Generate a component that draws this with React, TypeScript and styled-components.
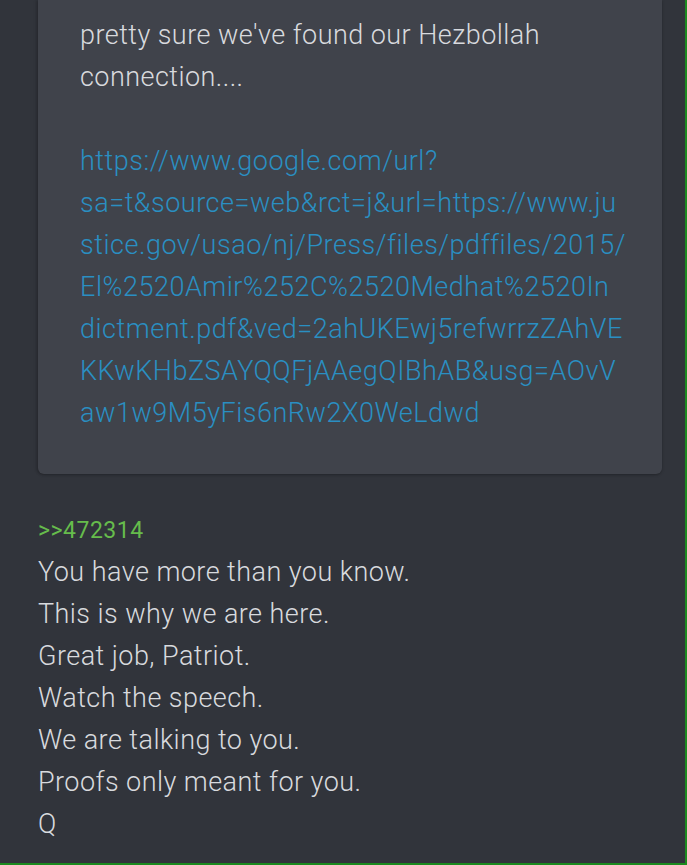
import styled, { createGlobalStyle } from 'styled-components';

const GlobalStyle = createGlobalStyle`
  html, body {
    margin: 0;
    padding: 0;
    background: #31343b;
  }
  body {
    font-family: Roboto, "Noto Sans", sans-serif;
    font-weight: 300;
  }
`;

const Frame = styled.div`
  box-sizing: border-box;
  width: 687px;
  height: 865px;
  overflow: hidden;
  background: #31343b;
  border-right: 2px solid #1b8a1f;
  border-bottom: 2px solid #1b8a1f;
  padding: 0 36px 0 38px;
`;

const QuoteCard = styled.div`
  background: #40434b;
  border-radius: 0 0 6px 6px;
  box-shadow: 0 1px 3px rgba(0, 0, 0, 0.25), -2px 0 3px rgba(0, 0, 0, 0.12);
  padding: 14px 30px 40px 42px;
  width: 624px;
  box-sizing: border-box;
`;

const Body = styled.p`
  margin: 0;
  font-size: 27px;
  letter-spacing: 0.45px;
  line-height: 42px;
  color: #d8dade;
`;

const Link = styled.a`
  display: block;
  margin-top: 42px;
  font-size: 27px;
  letter-spacing: 0.52px;
  line-height: 42px;
  color: #2a8fc2;
  text-decoration: none;
  white-space: nowrap;
`;

const Reply = styled.div`
  margin-top: 36px;
`;

const QuoteLink = styled.a`
  display: block;
  font-size: 23px;
  font-weight: 400;
  letter-spacing: 0.5px;
  line-height: 41px;
  color: #66bc4c;
  text-decoration: none;
`;

const LINES = [
  'You have more than you know.',
  'This is why we are here.',
  'Great job, Patriot.',
  'Watch the speech.',
  'We are talking to you.',
  'Proofs only meant for you.',
  'Q',
];

const URL_LINES = [
  'https://www.google.com/url?',
  'sa=t&source=web&rct=j&url=https://www.ju',
  'stice.gov/usao/nj/Press/files/pdffiles/2015/',
  'El%2520Amir%252C%2520Medhat%2520In',
  'dictment.pdf&ved=2ahUKEwj5refwrrzZAhVE',
  'KKwKHbZSAYQQFjAAegQIBhAB&usg=AOvV',
  'aw1w9M5yFis6nRw2X0WeLdwd',
];

export default function App() {
  return (
    <Frame>
      <GlobalStyle />
      <QuoteCard>
        <Body>
          pretty sure we've found our Hezbollah
          <br />
          connection....
        </Body>
        <Link href="#">
          {URL_LINES.map((part, i) => (
            <span key={part}>
              {part}
              {i < URL_LINES.length - 1 && <br />}
            </span>
          ))}
        </Link>
      </QuoteCard>
      <Reply>
        <QuoteLink href="#">&gt;&gt;472314</QuoteLink>
        {LINES.map((line) => (
          <Body key={line}>{line}</Body>
        ))}
      </Reply>
    </Frame>
  );
}
